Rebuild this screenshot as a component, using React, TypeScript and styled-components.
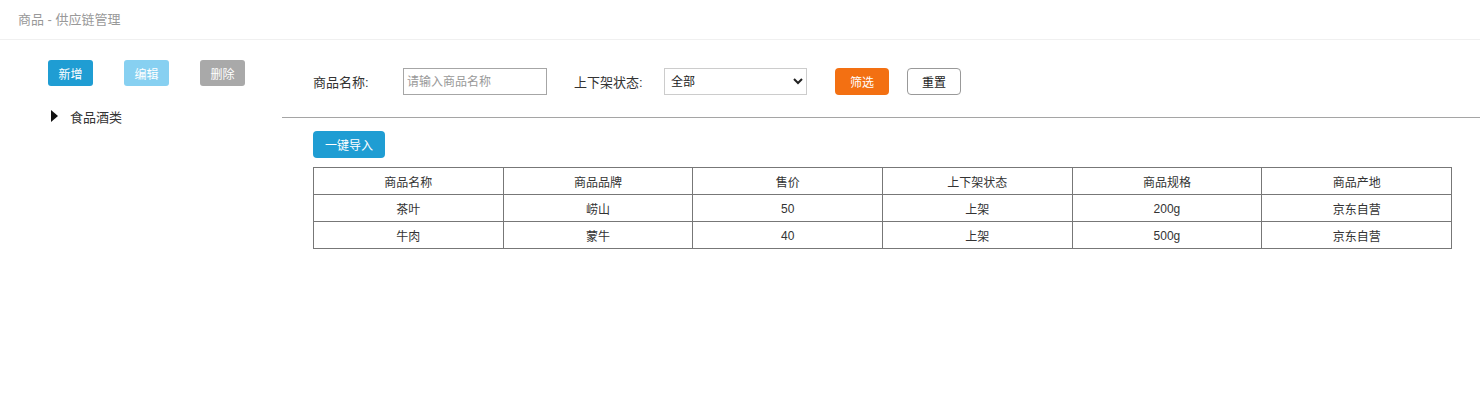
import styled, { createGlobalStyle } from 'styled-components';

const GlobalStyle = createGlobalStyle`
  body {
    margin: 0;
    background: #fff;
    font-family: 'Liberation Sans', 'Noto Sans CJK SC', sans-serif;
    color: #333;
  }
`;

const products = [
  { name: '茶叶', brand: '崂山', price: 50, status: '上架', spec: '200g', origin: '京东自营' },
  { name: '牛肉', brand: '蒙牛', price: 40, status: '上架', spec: '500g', origin: '京东自营' },
];

const columns = ['商品名称', '商品品牌', '售价', '上下架状态', '商品规格', '商品产地'];

const App = () => {
  return (
    <Page>
      <GlobalStyle />
      <Header>商品 - 供应链管理</Header>
      <Body>
        <Sidebar>
          <ButtonRow>
            <SmallButton $variant='primary'>新增</SmallButton>
            <SmallButton $variant='light'>编辑</SmallButton>
            <SmallButton $variant='gray'>删除</SmallButton>
          </ButtonRow>
          <TreeItem>
            <Caret />
            <span>食品酒类</span>
          </TreeItem>
        </Sidebar>
        <Main>
          <FilterBar>
            <Label>商品名称:</Label>
            <TextInput placeholder='请输入商品名称' />
            <Label $wide>上下架状态:</Label>
            <Select defaultValue='all'>
              <option value='all'>全部</option>
              <option value='on'>上架</option>
              <option value='off'>下架</option>
            </Select>
            <FilterButton>筛选</FilterButton>
            <ResetButton>重置</ResetButton>
          </FilterBar>
          <Content>
            <ImportButton>一键导入</ImportButton>
            <Table>
              <thead>
                <tr>
                  {columns.map((c) => (
                    <Cell as='th' key={c}>
                      {c}
                    </Cell>
                  ))}
                </tr>
              </thead>
              <tbody>
                {products.map((p) => (
                  <tr key={p.name}>
                    <Cell>{p.name}</Cell>
                    <Cell>{p.brand}</Cell>
                    <Cell>
                      <Num>{p.price}</Num>
                    </Cell>
                    <Cell>{p.status}</Cell>
                    <Cell>
                      <Num>{p.spec}</Num>
                    </Cell>
                    <Cell>{p.origin}</Cell>
                  </tr>
                ))}
              </tbody>
            </Table>
          </Content>
        </Main>
      </Body>
    </Page>
  );
};

export default App;

const Page = styled.div`
  width: 1480px;
  height: 410px;
  background: #fff;
`;

const Header = styled.div`
  height: 39px;
  line-height: 39px;
  padding-left: 18px;
  font-size: 13px;
  color: #999;
  border-bottom: 1px solid #f0f0f0;
`;

const Body = styled.div`
  display: flex;
  flex-direction: row;
`;

const Sidebar = styled.div`
  width: 282px;
  flex-shrink: 0;
  padding: 20px 0 0 48px;
  box-sizing: border-box;
`;

const ButtonRow = styled.div`
  display: flex;
  gap: 31px;
`;

const variants: Record<string, string> = {
  primary: '#1f9dd3',
  light: '#87d0f1',
  gray: '#a9a9a9',
};

const SmallButton = styled.button<{ $variant: string }>`
  width: 45px;
  height: 26px;
  padding: 0;
  border: none;
  border-radius: 3px;
  background: ${(p) => variants[p.$variant]};
  color: #fff;
  font-size: 12px;
  font-family: inherit;
`;

const TreeItem = styled.div`
  display: flex;
  align-items: center;
  margin-top: 20px;
  height: 20px;
  font-size: 13px;
  color: #333;
  padding-left: 3px;
`;

const Caret = styled.span`
  width: 0;
  height: 0;
  border-top: 6px solid transparent;
  border-bottom: 6px solid transparent;
  border-left: 7px solid #111;
  margin-right: 12px;
`;

const Main = styled.div`
  flex: 1;
`;

const FilterBar = styled.div`
  display: flex;
  align-items: center;
  height: 78px;
  padding: 6px 0 0 31px;
  border-bottom: 1px solid #a5a5a5;
  box-sizing: border-box;
`;

const Label = styled.span<{ $wide?: boolean }>`
  font-size: 13px;
  color: #333;
  width: 90px;
  margin-left: ${(p) => (p.$wide ? '27px' : '0')};
`;

const TextInput = styled.input`
  width: 144px;
  height: 27px;
  box-sizing: border-box;
  border: 1px solid #a6a6a6;
  padding: 0 3px;
  font-size: 12px;
  font-family: inherit;
  outline: none;
  &::placeholder {
    color: #999;
  }
`;

const Select = styled.select`
  width: 143px;
  height: 27px;
  box-sizing: border-box;
  border: 1px solid #ccc;
  background: #fff;
  font-size: 12px;
  font-family: inherit;
  color: #222;
  padding: 0 2px;
`;

const FilterButton = styled.button`
  margin-left: 28px;
  width: 54px;
  height: 27px;
  border: none;
  border-radius: 4px;
  background: #f37012;
  color: #fff;
  font-size: 12px;
  font-family: inherit;
`;

const ResetButton = styled.button`
  margin-left: 18px;
  width: 54px;
  height: 27px;
  border: 1px solid #999;
  border-radius: 4px;
  background: #fff;
  color: #222;
  font-size: 12px;
  font-family: inherit;
`;

const Content = styled.div`
  padding: 13px 28px 0 31px;
`;

const ImportButton = styled.button`
  display: block;
  width: 72px;
  height: 27px;
  border: none;
  border-radius: 4px;
  background: #1f9dd3;
  color: #fff;
  font-size: 12px;
  font-family: inherit;
  padding: 0;
`;

const Table = styled.table`
  margin-top: 9px;
  width: 1139px;
  border-collapse: collapse;
  table-layout: fixed;
`;

const Cell = styled.td`
  border: 1px solid #777;
  height: 26px;
  padding: 0;
  text-align: center;
  font-size: 12px;
  font-weight: normal;
  color: #333;
`;

const Num = styled.span`
  vertical-align: -1px;
`;
